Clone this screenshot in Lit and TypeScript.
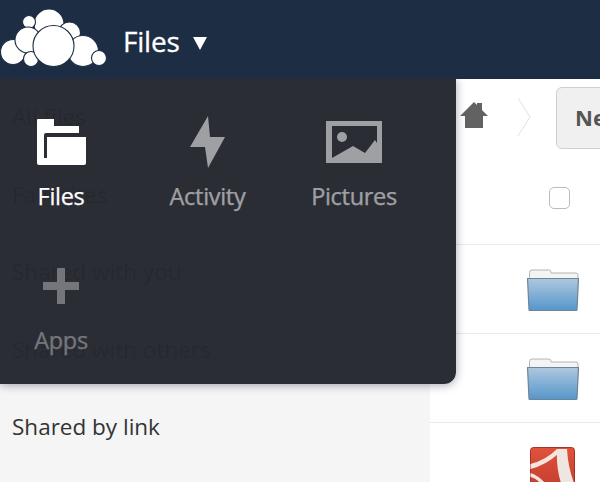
import { LitElement, html, css, svg } from "lit";
import { customElement } from "lit/decorators.js";

const cloud = [
  [49, 24, 15], [29, 22, 6.5], [69.5, 33, 11], [13, 52, 12.5], [28, 40, 13], [31, 59, 7.5],
  [83, 51, 15.5], [99, 58, 7.5], [53.5, 46, 20.5],
];

@customElement("app-root")
export class AppRoot extends LitElement {
  static styles = css`
    :host { display: block; width: 600px; height: 482px; position: relative; overflow: hidden; font-family: "Open Sans", sans-serif; background: #fff; }
    header { height: 79px; background: #1d2d44; display: flex; align-items: center; color: #fff; }
    .logo { width: 108px; height: 79px; flex: none; }
    .title { margin-left: 15px; font-size: 28px; font-weight: 400; line-height: 1; margin-top: 3px; letter-spacing: -0.2px; -webkit-text-stroke: 0.3px #fff; }
    .caret { margin-left: 13px; margin-top: 6px; width: 14px; height: 14px; }
    .main { display: flex; height: 403px; }
    nav { width: 430px; flex: none; background: #f5f5f5; color: #333; font-size: 22.5px; }
    nav div { height: 77.5px; display: flex; align-items: center; padding-left: 12px; position: relative; top: -1px; }
    .files { flex: 1; position: relative; min-width: 0; }
    .crumbs { height: 79px; display: flex; align-items: center; padding: 0 0 0 30px; box-sizing: border-box; }
    .home { width: 28px; height: 26px; flex: none; margin-top: -8px; }
    .chev { width: 14px; height: 40px; margin-left: 29px; flex: none; margin-top: -4px; }
    .new { margin-left: 25px; margin-top: -1px; height: 62px; width: 70px; flex: none; box-sizing: border-box; border: 1.5px solid #cfcfcf; border-radius: 6px; background: #f0f0f0; color: #555; font-weight: 700; font-size: 22px; line-height: 59px; padding-left: 18px; white-space: nowrap; overflow: hidden; }
    .row { height: 89px; border-bottom: 1px solid #e9e9e9; box-sizing: border-box; display: flex; align-items: center; padding-left: 97px; }
    .row.head { height: 87px; padding-left: 119px; padding-bottom: 6px; }
    .check { width: 21px; height: 22px; box-sizing: border-box; border: 1.5px solid #bbb; border-radius: 5px; }
    .folder { width: 52px; height: 44px; margin-top: 1px; }
    .row.last { border: 0; height: 60px; align-items: flex-start; padding-left: 100px; }
    .pdf { width: 46px; height: 50px; margin-top: 24px; flex: none; }
    .menu { position: absolute; left: 0; top: 79px; width: 456px; height: 305px; background: rgba(38, 40, 48, 0.975); border-radius: 0 0 12px 0; box-shadow: 0 1px 10px rgba(50, 55, 80, 0.45); display: grid; grid-template-columns: repeat(3, 122px); column-gap: 24.5px; grid-auto-rows: 144px; padding-top: 37px; box-sizing: border-box; }
    .app { display: flex; flex-direction: column; align-items: center; color: #fff; font-size: 23.5px; letter-spacing: -0.3px; }
    .app .ico { height: 52px; display: flex; align-items: center; justify-content: center; margin-bottom: 11px; }
    .app span { line-height: 34px; -webkit-text-stroke: 0.25px currentColor; }
    .dim { opacity: 0.55; }
    .dim2 { opacity: 0.35; }
  `;

  private folder() {
    return html`<svg class="folder" viewBox="0 0 52 44">
      <defs><linearGradient id="fg" x1="0" y1="0" x2="0" y2="1"><stop offset="0" stop-color="#aec8de"/><stop offset="1" stop-color="#5596cb"/></linearGradient></defs>
      <path d="M2.5 13V4.5Q2.5 2 5 2H22Q24 2 24 4.5V5H49Q51 5 51 7V13Z" fill="#f4f4f4" stroke="#b4b4b4"/>
      <path d="M0.5 10.5H51.5L50 41.5Q50 42.5 49 42.5H3Q2 42.5 2 41.5Z" fill="url(#fg)" stroke="#6f8494" stroke-width="1.2"/>
    </svg>`;
  }

  render() {
    return html`
      <header>
        <svg class="logo" viewBox="0 0 108 79">
          ${cloud.map(([x, y, r]) => svg`<circle cx=${x} cy=${y} r=${r} fill="#fff" stroke="#1d2d44" stroke-width="1.1"/>`)}
        </svg>
        <span class="title">Files</span>
        <svg class="caret" viewBox="0 0 14 14"><path d="M0 1H14L7 14Z" fill="#fff"/></svg>
      </header>
      <div class="main">
        <nav>
          <div>All files</div><div>Favorites</div><div>Shared with you</div><div>Shared with others</div><div>Shared by link</div>
        </nav>
        <section class="files">
          <div class="crumbs">
            <svg class="home" viewBox="0 0 28 26"><path d="M0 14L14 0L17 3V1H22V8L28 14H23V26H5V14Z" fill="#626262"/></svg>
            <svg class="chev" viewBox="0 0 14 40"><path d="M1 1L13 20L1 39" fill="none" stroke="#e2e2e2"/></svg>
            <div class="new">New</div>
          </div>
          <div class="row head"><div class="check"></div></div>
          <div class="row">${this.folder()}</div>
          <div class="row">${this.folder()}</div>
          <div class="row last">
            <svg class="pdf" viewBox="0 0 46 50">
              <defs><linearGradient id="pg" x1="0" y1="0" x2="0" y2="1"><stop offset="0" stop-color="#e0523a"/><stop offset="1" stop-color="#b8352a"/></linearGradient></defs>
              <rect x="0.5" y="0.5" width="44" height="60" rx="3" fill="url(#pg)" stroke="#a83025"/>
              <path d="M27 2H37Q38 20 44 36H31Q26 20 27 2Z" fill="#efe6e2"/>
              <path d="M0.5 17Q16 13 27 2L28 7Q16 18 0.5 22Z" fill="#f3e6e0"/>
              <path d="M0.5 26Q9 29 15 36H10Q6 31 0.5 30Z" fill="#f3e6e0"/>
            </svg>
          </div>
        </section>
      </div>
      <div class="menu">
        <div class="app">
          <div class="ico"><svg width="49" height="46" viewBox="0 0 49 46"><path d="M1 0H17V7H42V14H9Q7 14 7 16V39H10V18H49V44Q49 46 47 46H2Q0 46 0 44V1Q0 0 1 0Z" fill="#fff"/></svg></div>
          <span>Files</span>
        </div>
        <div class="app">
          <div class="ico dim"><svg width="36" height="52" viewBox="0 0 36 52"><path d="M18 0L0 31H15L18 52L35 21H20Z" fill="#fff"/></svg></div>
          <span class="dim">Activity</span>
        </div>
        <div class="app">
          <div class="ico dim"><svg width="56" height="42" viewBox="0 0 56 42"><path fill-rule="evenodd" d="M0 0H56V42H0ZM6 5V37L27 25L39 32L49 19L51 22V5Z" fill="#fff"/><circle cx="16" cy="16" r="5" fill="#fff"/></svg></div>
          <span class="dim">Pictures</span>
        </div>
        <div class="app">
          <div class="ico dim2"><svg width="36" height="36" viewBox="0 0 36 36"><path d="M14 0H22V14H36V22H22V36H14V22H0V14H14Z" fill="#fff"/></svg></div>
          <span class="dim2">Apps</span>
        </div>
      </div>
    `;
  }
}
